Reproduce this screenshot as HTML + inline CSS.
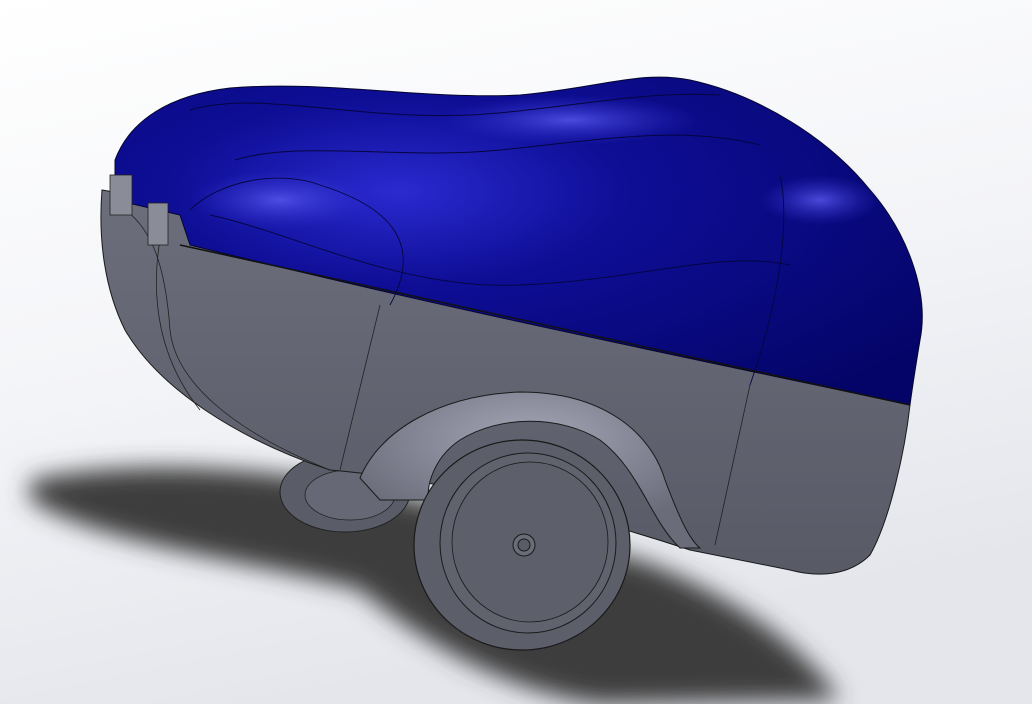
<!DOCTYPE html>
<html><head><meta charset="utf-8"><style>
html,body{margin:0;padding:0;width:1032px;height:704px;overflow:hidden;background:#fff}
svg{display:block}
</style></head><body>
<svg width="1032" height="704" viewBox="0 0 1032 704" xmlns="http://www.w3.org/2000/svg">
<defs>
<linearGradient id="bg" x1="0" y1="0" x2="0.3" y2="1">
<stop offset="0" stop-color="#ffffff"/><stop offset="0.5" stop-color="#f4f5f8"/><stop offset="1" stop-color="#e4e6ec"/>
</linearGradient>
<filter id="blur" x="-20%" y="-20%" width="140%" height="140%"><feGaussianBlur stdDeviation="12"/></filter>
<radialGradient id="blue" cx="0.35" cy="0.35" r="0.8">
<stop offset="0" stop-color="#2a2ad0"/><stop offset="0.35" stop-color="#0e0e96"/><stop offset="1" stop-color="#040468"/>
</radialGradient>
<linearGradient id="gray" x1="0" y1="0" x2="0" y2="1">
<stop offset="0" stop-color="#6c6e7c"/><stop offset="1" stop-color="#585a66"/>
</linearGradient>
<radialGradient id="fender" cx="0.5" cy="0.3" r="0.6">
<stop offset="0" stop-color="#a4a6b6"/><stop offset="1" stop-color="#6a6c7a"/>
</radialGradient>
<radialGradient id="hl1" cx="0.5" cy="0.5" r="0.5">
<stop offset="0" stop-color="#5a5af0" stop-opacity="0.8"/><stop offset="1" stop-color="#3030d0" stop-opacity="0"/>
</radialGradient>
</defs>
<rect width="1032" height="704" fill="url(#bg)"/>
<path d="M30 480 C150 455 300 470 420 500 L640 560 C720 590 800 640 840 700 L600 704 C500 690 420 640 360 590 C250 560 100 545 30 500 Z" fill="#3c3c3c" filter="url(#blur)"/>
<ellipse cx="345" cy="492" rx="65" ry="40" fill="#5a5c68" stroke="#222" stroke-width="1"/>
<ellipse cx="350" cy="495" rx="45" ry="25" fill="#666875" stroke="#222" stroke-width="0.8"/>
<path d="M102 190 L190 205 C260 240 600 330 910 405 C905 450 890 520 870 555 C850 575 820 578 790 570 L690 550 C600 520 450 480 330 470 C240 440 160 390 125 330 C105 290 98 240 102 190 Z" fill="url(#gray)" stroke="#1a1a1a" stroke-width="1"/>
<path d="M110 200 C150 220 165 260 170 330 C175 380 230 430 330 470" fill="none" stroke="#222" stroke-width="0.8"/>
<path d="M160 240 C150 300 160 360 200 410" fill="none" stroke="#222" stroke-width="0.8"/>
<path d="M380 305 L340 470" fill="none" stroke="#222" stroke-width="0.8"/>
<path d="M750 385 L715 545" fill="none" stroke="#222" stroke-width="0.8"/>
<path d="M360 478 C380 430 440 395 520 392 C600 392 650 430 665 480 C680 520 690 540 700 548 L680 548 C650 520 640 470 600 440 C560 415 500 415 460 440 C430 460 425 495 430 500 L380 500 Z" fill="url(#fender)" stroke="#1a1a1a" stroke-width="1"/>
<ellipse cx="522" cy="545" rx="108" ry="105" fill="#5c5e6a" stroke="#1a1a1a" stroke-width="1.2"/>
<ellipse cx="528" cy="543" rx="88" ry="90" fill="#60626e" stroke="#1a1a1a" stroke-width="1"/>
<ellipse cx="530" cy="542" rx="78" ry="80" fill="#5d5f6b" stroke="#1a1a1a" stroke-width="0.8"/>
<circle cx="524" cy="545" r="11" fill="#6a6c78" stroke="#1a1a1a"/>
<circle cx="524" cy="545" r="6" fill="#5a5c68" stroke="#1a1a1a"/>
<path d="M115 160 C130 120 170 95 230 88 C330 80 420 100 520 95 C600 88 640 70 690 80 C760 95 830 140 870 190 C905 230 930 290 920 340 C915 370 912 390 910 405 C700 360 450 310 190 245 L180 215 L115 200 Z" fill="url(#blue)" stroke="#050530" stroke-width="1"/>
<ellipse cx="280" cy="200" rx="90" ry="30" fill="url(#hl1)"/>
<ellipse cx="570" cy="120" rx="130" ry="25" fill="url(#hl1)"/>
<ellipse cx="820" cy="200" rx="60" ry="25" fill="url(#hl1)"/>
<path d="M190 110 C260 90 350 120 470 115 C560 110 640 90 720 95" fill="none" stroke="#050540" stroke-width="1"/>
<path d="M235 160 C300 140 400 160 500 150 C600 140 680 125 760 145" fill="none" stroke="#050540" stroke-width="1"/>
<path d="M190 210 C220 180 280 170 320 185 C400 210 420 250 390 305" fill="none" stroke="#050540" stroke-width="0.9"/>
<path d="M210 215 C300 235 400 290 520 285 C640 280 720 250 790 265" fill="none" stroke="#050540" stroke-width="0.9"/>
<path d="M780 175 C790 220 780 300 750 385" fill="none" stroke="#050540" stroke-width="0.9"/>
<path d="M180 245 L910 405" stroke="#111" stroke-width="1.5"/>
<rect x="110" y="175" width="22" height="40" fill="#8a8c98" stroke="#222" stroke-width="0.8"/>
<rect x="148" y="203" width="20" height="42" fill="#8a8c98" stroke="#222" stroke-width="0.8"/>
</svg>
</body></html>
